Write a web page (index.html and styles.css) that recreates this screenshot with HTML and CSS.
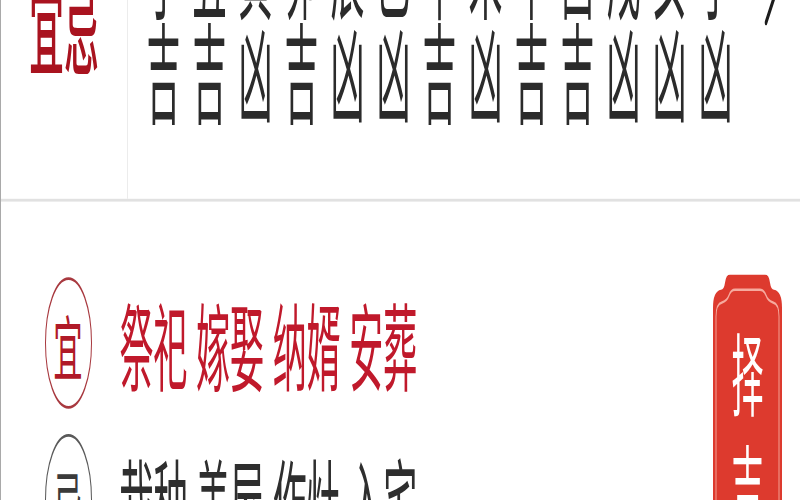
FILE: index.html
```html
<!DOCTYPE html>
<html lang="zh-CN">
<head>
<meta charset="utf-8">
<title>宜忌</title>
<link rel="stylesheet" href="styles.css">
</head>
<body>
<div class="page">
  <section class="top">
    <div class="label-col"><div class="label">宜忌</div></div>
    <div class="hours">
      <span>子</span><span>丑</span><span>寅</span><span>卯</span><span>辰</span><span>巳</span><span>午</span><span>未</span><span>申</span><span>酉</span><span>戌</span><span>亥</span><span>子</span>
      <span>吉</span><span>吉</span><span>凶</span><span>吉</span><span>凶</span><span>凶</span><span>吉</span><span>凶</span><span>吉</span><span>吉</span><span>凶</span><span>凶</span><span>凶</span>
    </div>
    <svg class="chev" viewBox="0 0 14 26" width="14" height="26"><polyline points="2,1 13,13 2,25" fill="none" stroke="#1c1c1c" stroke-width="2.4" stroke-linecap="round" stroke-linejoin="round"/></svg>
  </section>
  <section class="lower">
    <div class="list">
      <div class="row yi">
        <div class="circle"><span>宜</span></div>
        <div class="items">祭祀 嫁娶 纳婿 安葬</div>
      </div>
      <div class="row ji">
        <div class="circle"><span>忌</span></div>
        <div class="items">栽种 盖屋 作灶 入宅</div>
      </div>
    </div>
    <div class="badge">
      <svg class="badge-bg" viewBox="0 0 69 90" width="69" height="90" preserveAspectRatio="none">
        <path d="M17,0 H52 Q56,0 57,3 Q58,5.5 61,5.5 Q69,6 69,12 V90 H0 V12 Q0,6 8,5.5 Q11,5.5 12,3 Q13,0 17,0 Z" fill="#dd3a2e"/>
        <path d="M3,90 V15 Q3,10.5 9,10 Q14,9.5 16,7.5 Q18,5.5 22,5.5 H47 Q51,5.5 53,7.5 Q55,9.5 60,10 Q66,10.5 66,15 V90" fill="none" stroke="#f6aa9e" stroke-width="0.9"/>
      </svg>
      <div class="badge-text">择<br>吉</div>
    </div>
  </section>
</div>
</body>
</html>
```

FILE: styles.css
```css
html, body {
  margin: 0;
  padding: 0;
  background: #ffffff;
  overflow: hidden;
}
body {
  width: 800px;
  height: 500px;
  font-family: "Noto Sans CJK SC", "Noto Sans", sans-serif;
}
.page {
  width: 800px;
  height: 178.6px;
  box-sizing: border-box;
  border-left: 1px solid #a9a9a9;
  transform: scaleY(2.8);
  transform-origin: 0 0;
  overflow: hidden;
  background: #fff;
}
.top {
  display: flex;
  height: 72.3px;
  box-sizing: border-box;
  border-bottom: 1px solid #e1e1e1;
}
.label-col {
  width: 126px;
  flex: none;
  border-right: 1px solid #ececec;
  text-align: center;
}
.label {
  margin-top: -9.5px;
  font-size: 35px;
  line-height: 36px;
  font-weight: 500;
  color: #a9131f;
}
.hours {
  display: grid;
  grid-template-columns: repeat(13, 46px);
  grid-auto-rows: 37.5px;
  justify-items: center;
  align-items: start;
  margin-left: 12.5px;
  margin-top: -30.4px;
  font-size: 34px;
  line-height: 35.3px;
  color: #2b2b2b;
}
.hours span {
  display: block;
  transform: scaleY(1.14);
}
.chev {
  margin-left: auto;
  margin-right: 22px;
  margin-top: -17px;
  flex: none;
}
.lower {
  display: flex;
  justify-content: space-between;
  padding: 25.3px 18px 0 44px;
}
.list {
  margin-top: 1.7px;
  display: flex;
  flex-direction: column;
  gap: 9.1px;
}
.row {
  display: flex;
  align-items: center;
  gap: 27.5px;
  height: 47px;
}
.circle {
  width: 47px;
  height: 47px;
  box-sizing: border-box;
  border-radius: 50%;
  border: 1px solid #a8393f;
  display: flex;
  align-items: center;
  justify-content: center;
  font-size: 28px;
  line-height: 1;
  color: #b01a28;
}
.circle span {
  display: block;
  transform: scale(1.05, 0.9);
}
.ji .circle {
  border-color: #5a5a5a;
  color: #3a3a3a;
}
.items {
  font-size: 34px;
  line-height: 47px;
  word-spacing: 1px;
  color: #c0192b;
  white-space: nowrap;
}
.ji .items {
  color: #2e2e2e;
}
.badge {
  position: relative;
  width: 69px;
  height: 90px;
  flex: none;
}
.badge-bg {
  display: block;
}
.badge-text {
  position: absolute;
  top: 0;
  left: 0;
  width: 69px;
  padding-top: 14px;
  text-align: center;
  font-size: 32px;
  line-height: 40px;
  color: #ffffff;
}
```
